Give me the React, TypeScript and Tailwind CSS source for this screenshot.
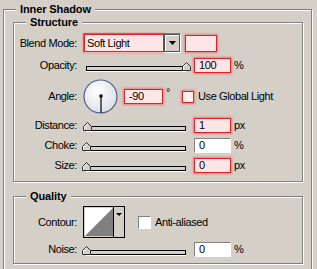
import React from "react";

const etched = "border border-[#808080] shadow-[inset_1px_1px_0_#fff,1px_1px_0_#fff]";
const hot = "border border-[#e0202a] bg-[#ffe6e6] shadow-[0_0_2px_1px_rgba(255,60,60,0.55)]";
const sunken = "border border-t-[#808080] border-l-[#808080] border-b-white border-r-white bg-white";

function Thumb() {
  return (
    <svg width="10" height="9" viewBox="0 0 10 9">
      <polygon points="0.5,8.5 0.5,4.5 4.5,0.5 8.5,4.5 8.5,8.5" fill="#d4d0c8" stroke="#303030" />
      <polyline points="1.5,7.5 1.5,4.8 4.5,1.8" fill="none" stroke="#fff" />
    </svg>
  );
}

function Slider({ value }: { value: number }) {
  return (
    <div className="relative w-[105px] h-[15px] ml-[5px]">
      <div className="absolute left-[4px] top-[8px] w-[100px] h-[5px] border border-black bg-[#d4d0c8] shadow-[0_1px_0_#fff]" />
      <div className="absolute top-[4px]" style={{ left: value }}>
        <Thumb />
      </div>
    </div>
  );
}

function Field({ value, highlighted, width = "w-[37px]" }: { value: string; highlighted?: boolean; width?: string }) {
  return (
    <div className={`${width} h-[15px] flex items-center pl-[4px] leading-none ${highlighted ? hot : sunken}`}>
      {value}
    </div>
  );
}

function Label({ children }: { children: React.ReactNode }) {
  return <div className="w-[63px] text-right leading-none whitespace-nowrap">{children}</div>;
}

function SliderRow({ label, value, field, unit, highlighted, mt }: { label: string; value: number; field: string; unit: string; highlighted?: boolean; mt: string }) {
  return (
    <div className={`flex items-center h-[15px] ${mt}`}>
      <Label>{label}</Label>
      <Slider value={value} />
      <div className="ml-[7px]">
        <Field value={field} highlighted={highlighted} />
      </div>
      <span className="ml-[3px] leading-none">{unit}</span>
    </div>
  );
}

function Legend({ children }: { children: React.ReactNode }) {
  return (
    <span className="absolute -top-[8px] left-[12px] px-[4px] bg-[#d4d0c8] font-bold leading-[14px] tracking-[-0.1px]">
      {children}
    </span>
  );
}

export default function App() {
  return (
    <div className="w-[317px] h-[269px] overflow-hidden bg-[#d4d0c8] pt-[9px] pl-[3px] text-[11px] tracking-[-0.4px] text-black font-['Liberation_Sans',Arial,sans-serif]">
      <div className={`relative w-[309px] h-[280px] ${etched}`}>
        <Legend>Inner Shadow</Legend>

        <div className={`relative ml-[9px] mt-[12px] w-[290px] h-[160px] ${etched}`}>
          <Legend>Structure</Legend>

          <div className="flex items-center h-[20px] mt-[10px]">
            <Label>Blend Mode:</Label>
            <div className="ml-[6px] flex border border-t-[#808080] border-l-[#808080] border-b-white border-r-white">
              <div className={`w-[80px] h-[18px] flex items-center pl-[2px] leading-none ${hot}`}>Soft Light</div>
              <div className="w-[16px] h-[18px] flex items-center justify-center bg-[#d4d0c8] border border-[#505050] shadow-[inset_1px_1px_0_#fff]">
                <svg width="7" height="4" viewBox="0 0 7 4">
                  <polygon points="0,0 7,0 3.5,4" fill="#000" />
                </svg>
              </div>
            </div>
            <div className={`ml-[4px] w-[32px] h-[17px] ${hot}`} />
          </div>

          <SliderRow label="Opacity:" value={100} field="100" unit="%" highlighted mt="mt-[5px]" />

          <div className="flex items-center h-[35px] mt-[6px]">
            <Label>Angle:</Label>
            <svg className="ml-[6px]" width="35" height="35" viewBox="0 0 35 35">
              <defs>
                <radialGradient id="dial" cx="0.4" cy="0.35" r="0.7">
                  <stop offset="0" stopColor="#ffffff" />
                  <stop offset="1" stopColor="#dcdde6" />
                </radialGradient>
              </defs>
              <circle cx="17.5" cy="17.5" r="16.5" fill="url(#dial)" stroke="#4b5e8a" strokeWidth="1.2" />
              <line x1="18" y1="17" x2="18" y2="34" stroke="#000" strokeWidth="1.2" />
              <rect x="16.5" y="15.5" width="3" height="3" fill="#000" />
            </svg>
            <div className="ml-[6px]">
              <Field value="-90" highlighted width="w-[39px]" />
            </div>
            <span className="ml-[3px] self-start mt-[8px] leading-none">°</span>
            <div className="ml-[12px] w-[12px] h-[12px] border border-[#e0202a] bg-[#fff0f0] shadow-[0_0_2px_1px_rgba(255,60,60,0.55)]" />
            <span className="ml-[4px] leading-none">Use Global Light</span>
          </div>

          <SliderRow label="Distance:" value={1} field="1" unit="px" highlighted mt="mt-[4px]" />
          <SliderRow label="Choke:" value={0} field="0" unit="%" mt="mt-[5px]" />
          <SliderRow label="Size:" value={0} field="0" unit="px" highlighted mt="mt-[5px]" />
        </div>

        <div className={`relative ml-[9px] mt-[14px] w-[290px] h-[68px] ${etched}`}>
          <Legend>Quality</Legend>

          <div className="flex items-center h-[32px] mt-[9px]">
            <Label>Contour:</Label>
            <svg className="ml-[6px]" width="42" height="32" viewBox="0 0 42 32">
              <rect x="0.5" y="0.5" width="41" height="31" fill="#d4d0c8" stroke="#000" />
              <polygon points="2,2 30,2 2,30" fill="#fff" />
              <polygon points="30,2 30,30 2,30" fill="#808080" />
              <line x1="30.5" y1="1" x2="30.5" y2="31" stroke="#000" />
              <polygon points="33,7 39,7 36,10" fill="#000" />
            </svg>
            <div className={`ml-[13px] w-[13px] h-[13px] ${sunken}`} />
            <span className="ml-[4px] leading-none">Anti-aliased</span>
          </div>

          <SliderRow label="Noise:" value={0} field="0" unit="%" mt="mt-[4px]" />
        </div>
      </div>
    </div>
  );
}
